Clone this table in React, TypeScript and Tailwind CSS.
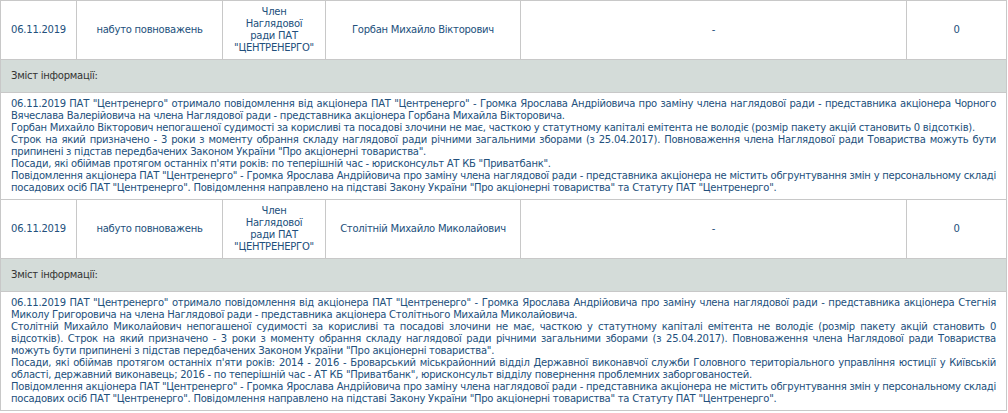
import React from "react";

type Line = { t: string; j?: boolean };

type Entry = {
  date: string;
  action: string;
  position: string[];
  name: string;
  extra: string;
  share: string;
  lines: Line[];
};

const entries: Entry[] = [
  {
    date: "06.11.2019",
    action: "набуто повноважень",
    position: ["Член", "Наглядової", "ради ПАТ", "\"ЦЕНТРЕНЕРГО\""],
    name: "Горбан Михайло Вікторович",
    extra: "-",
    share: "0",
    lines: [
      { t: "06.11.2019 ПАТ \"Центренерго\" отримало повідомлення від акціонера ПАТ \"Центренерго\" - Громка Ярослава Андрійовича про заміну члена наглядової ради - представника акціонера Чорного", j: true },
      { t: "Вячеслава Валерійовича на члена Наглядової ради - представника акціонера Горбана Михайла Вікторовича." },
      { t: "Горбан Михайло Вікторович непогашеної судимості за корисливі та посадові злочини не має, часткою у статутному капіталі емітента не володіє (розмір пакету акцій становить 0 відсотків)." },
      { t: "Строк на який призначено - 3 роки з моменту обрання складу наглядової ради річними загальними зборами (з 25.04.2017). Повноваження члена Наглядової ради Товариства можуть бути", j: true },
      { t: "припинені з підстав передбачених Законом України \"Про акціонерні товариства\"." },
      { t: "Посади, які обіймав протягом останніх п'яти років: по теперішній час - юрисконсульт АТ КБ \"Приватбанк\"." },
      { t: "Повідомлення акціонера ПАТ \"Центренерго\" - Громка Ярослава Андрійовича про заміну члена наглядової ради - представника акціонера не містить обгрунтування змін у персональному складі", j: true },
      { t: "посадових осіб ПАТ \"Центренерго\". Повідомлення направлено на підставі Закону України \"Про акціонерні товариства\" та Статуту ПАТ \"Центренерго\"." },
    ],
  },
  {
    date: "06.11.2019",
    action: "набуто повноважень",
    position: ["Член", "Наглядової", "ради ПАТ", "\"ЦЕНТРЕНЕРГО\""],
    name: "Столітній Михайло Миколайович",
    extra: "-",
    share: "0",
    lines: [
      { t: "06.11.2019 ПАТ \"Центренерго\" отримало повідомлення від акціонера ПАТ \"Центренерго\" - Громка Ярослава Андрійовича про заміну члена наглядової ради - представника акціонера Стегнія", j: true },
      { t: "Миколу Григоровича на члена Наглядової ради - представника акціонера Столітнього Михайла Миколайовича." },
      { t: "Столітній Михайло Миколайович непогашеної судимості за корисливі та посадові злочини не має, часткою у статутному капіталі емітента не володіє (розмір пакету акцій становить 0", j: true },
      { t: "відсотків). Строк на який призначено - 3 роки з моменту обрання складу наглядової ради річними загальними зборами (з 25.04.2017). Повноваження члена Наглядової ради Товариства", j: true },
      { t: "можуть бути припинені з підстав передбачених Законом України \"Про акціонерні товариства\"." },
      { t: "Посади, які обіймав протягом останніх п'яти років: 2014 - 2016 - Броварський міськрайонний відділ Державної виконавчої служби Головного територіального управління юстиції у Київській", j: true },
      { t: "області, державний виконавець; 2016 - по теперішній час - АТ КБ \"Приватбанк\", юрисконсульт відділу повернення проблемних заборгованостей." },
      { t: "Повідомлення акціонера ПАТ \"Центренерго\" - Громка Ярослава Андрійовича про заміну члена наглядової ради - представника акціонера не містить обгрунтування змін у персональному складі", j: true },
      { t: "посадових осіб ПАТ \"Центренерго\". Повідомлення направлено на підставі Закону України \"Про акціонерні товариства\" та Статуту ПАТ \"Центренерго\"." },
    ],
  },
];

const cell = "border border-[#c8c8c8] px-[5px] py-[5px] text-center align-middle";

export default function App() {
  return (
    <div className="w-[1008px] h-[413px] overflow-hidden bg-white font-['DejaVu_Sans',Verdana,sans-serif] text-[10px] leading-[12px] tracking-[-0.25px] text-[#22507c]">
      <table className="w-[1006px] table-fixed border-collapse">
        <colgroup>
          <col className="w-[76px]" />
          <col className="w-[146px]" />
          <col className="w-[103px]" />
          <col className="w-[195px]" />
          <col className="w-[386px]" />
          <col className="w-[100px]" />
        </colgroup>
        <tbody>
          {entries.map((e, i) => (
            <React.Fragment key={i}>
              <tr className="h-[59px]">
                <td className={cell}>{e.date}</td>
                <td className={cell}>{e.action}</td>
                <td className={cell}>
                  {e.position.map((p, k) => (
                    <div key={k}>{p}</div>
                  ))}
                </td>
                <td className={cell}>{e.name}</td>
                <td className={cell}>{e.extra}</td>
                <td className={cell}>{e.share}</td>
              </tr>
              <tr>
                <td
                  colSpan={6}
                  className="border border-[#c8c8c8] bg-[#d4dcd9] px-[10px] py-[10px] text-left text-[#333]"
                >
                  Зміст інформації:
                </td>
              </tr>
              <tr>
                <td colSpan={6} className="border border-[#c8c8c8] px-[10px] py-[5px] text-left">
                  {e.lines.map((l, k) => (
                    <div
                      key={k}
                      className={l.j ? "whitespace-nowrap [text-align-last:justify] text-justify" : "whitespace-nowrap"}
                    >
                      {l.t}
                    </div>
                  ))}
                </td>
              </tr>
            </React.Fragment>
          ))}
        </tbody>
      </table>
    </div>
  );
}
